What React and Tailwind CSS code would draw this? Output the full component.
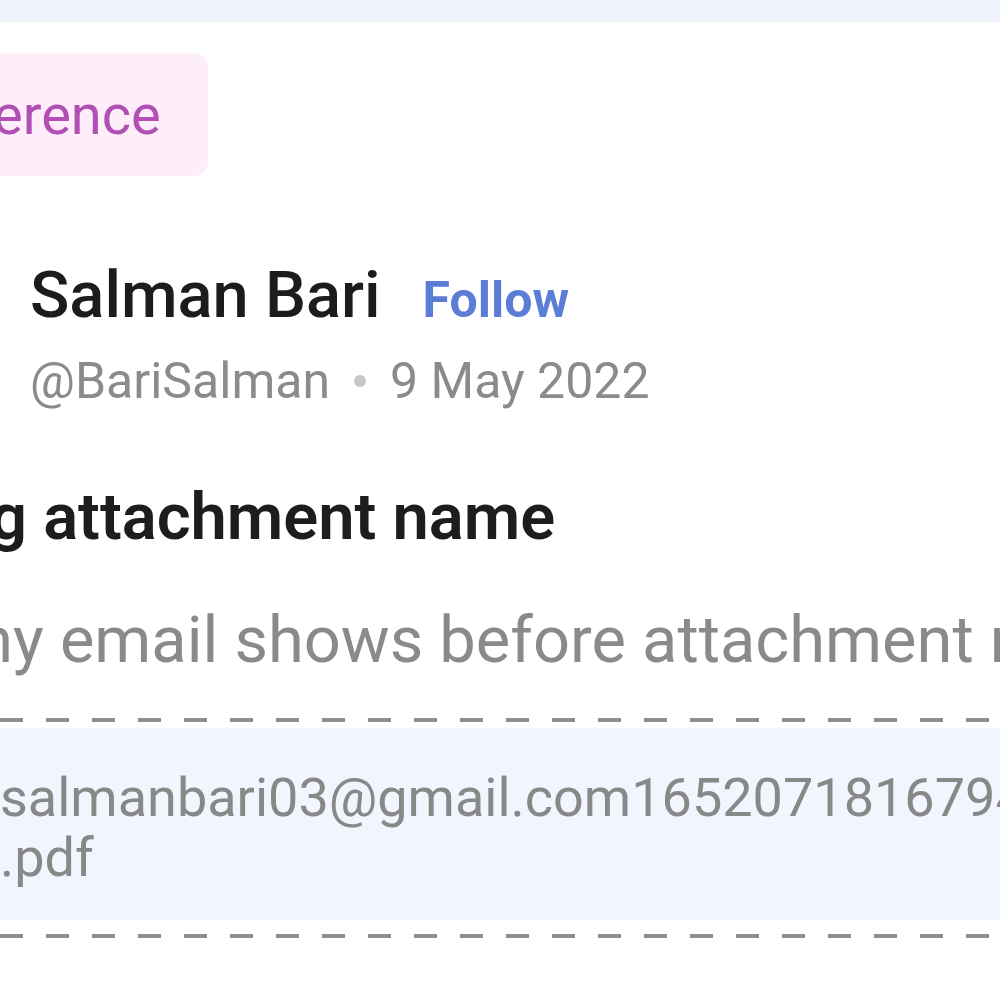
import React from "react";

const dashes =
  "h-[4px] w-full bg-[repeating-linear-gradient(90deg,#8e8e8e_0px,#8e8e8e_23px,transparent_23px,transparent_46px)]";

const App = () => {
  return (
    <div className="w-[1000px] h-[1000px] overflow-hidden bg-white font-['Roboto',sans-serif]">
      {/* top strip */}
      <div className="h-[22px] bg-[#eff3fb]" />

      {/* tag */}
      <div className="mt-[31px] flex">
        <div className="-ml-[20px] h-[123px] w-[228px] rounded-[14px] bg-[#fdeefa] flex items-center pl-[13px]">
          <span className="text-[56px] leading-none text-[#b24fb5] whitespace-nowrap">erence</span>
        </div>
      </div>

      {/* author */}
      <div className="mt-[87px] pl-[30px]">
        <div className="flex items-baseline gap-[42px] whitespace-nowrap">
          <span className="text-[65px] leading-none font-medium text-[#1c1c1c]">Salman Bari</span>
          <span className="text-[50px] leading-none font-bold text-[#5b7dd6]">Follow</span>
        </div>
        <div className="mt-[28px] flex items-center gap-[24px] text-[50px] leading-none text-[#8b8b8b] whitespace-nowrap">
          <span>@BariSalman</span>
          <span className="h-[12px] w-[12px] rounded-full bg-[#c6c6c6]" />
          <span>9 May 2022</span>
        </div>
      </div>

      {/* post */}
      <h2 className="mt-[79px] -ml-[10px] text-[65px] leading-none font-semibold text-[#1d1d1d] whitespace-nowrap">
        g attachment name
      </h2>
      <p className="mt-[58px] -ml-[44px] text-[65px] leading-none text-[#8a8a8a] whitespace-nowrap">
        my email shows before attachment name
      </p>

      {/* attachment */}
      <div className="mt-[45px]">
        <div className={dashes} />
        <div className="mt-[6px] h-[192px] bg-[#f1f5fd] pt-[40px] text-[54px] leading-[60px] text-[#888888] whitespace-nowrap">
          <div>salmanbari03@gmail.com1652071816794</div>
          <div>.pdf</div>
        </div>
        <div className={`mt-[14px] ${dashes}`} />
      </div>
    </div>
  );
};

export default App;
